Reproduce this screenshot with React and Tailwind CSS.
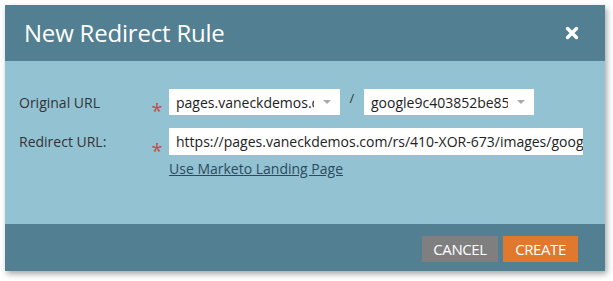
import React from 'react';

const Select = ({ value, width }) => (
  <div className={`flex items-center h-[26px] bg-white pl-[7px] pr-[8px] ${width}`}>
    <span className="flex-1 overflow-hidden whitespace-nowrap text-[14px] text-[#222]">{value}</span>
    <svg width="10" height="6" viewBox="0 0 10 6" className="ml-2 shrink-0">
      <path d="M1 1h8L5 5z" fill="#aaa" />
    </svg>
  </div>
);

const Required = () => (
  <span className="w-[20px] text-[20px] leading-none text-[#c0504d] pt-[12px] h-[26px] flex justify-center">*</span>
);

export default function App() {
  return (
    <div className="w-[613px] h-[281px] bg-white pt-[5px] pl-[5px]" style={{ fontFamily: '"Open Sans", sans-serif' }}>
      <div className="w-[600px] shadow-[2px_3px_6px_rgba(0,0,0,0.35)]">
        {/* Header */}
        <div className="h-[56px] bg-[#527f91] flex items-center justify-between pl-[19px] pr-[26px]">
          <h1 className="text-[24px] text-white font-normal tracking-[-0.2px]">New Redirect Rule</h1>
          <svg width="14" height="14" viewBox="0 0 14 14">
            <path d="M2.5 2.5l9 9M11.5 2.5l-9 9" stroke="white" strokeWidth="3.4" strokeLinecap="round" />
          </svg>
        </div>

        {/* Body */}
        <div className="h-[163px] bg-[#93c2d3] pt-[28px] pl-[14px]">
          <div className="flex items-center">
            <label className="w-[128px] text-[14px] text-[#333]">Original URL</label>
            <Required />
            <div className="flex items-center ml-[2px]">
              <Select value="pages.vaneckdemos.com" width="w-[171px]" />
              <span className="w-[24px] text-center text-[13px] text-[#333] -mt-[6px]">/</span>
              <Select value="google9c403852be85" width="w-[170px]" />
            </div>
          </div>
          <div className="flex items-center mt-[13px]">
            <label className="w-[128px] text-[14px] text-[#333]">Redirect URL:</label>
            <Required />
            <div className="ml-[2px] h-[27px] w-[414px] bg-white pl-[7px] flex items-center overflow-hidden whitespace-nowrap text-[14px] text-[#222]">
              https://pages.vaneckdemos.com/rs/410-XOR-673/images/google9c403852be85.html
            </div>
          </div>
          <div className="pl-[150px] mt-[1px]">
            <a href="#" className="text-[14px] text-[#2c4a5e] underline">Use Marketo Landing Page</a>
          </div>
        </div>

        {/* Footer */}
        <div className="h-[47px] bg-[#527f91] flex items-center justify-end pr-[27px] pt-[3px] gap-[5px]">
          <button className="h-[26px] w-[76px] bg-[#7f7f7f] text-white text-[15px] tracking-[-0.4px]">CANCEL</button>
          <button className="h-[26px] w-[75px] bg-[#e0782d] text-white text-[15px] tracking-[-0.4px]">CREATE</button>
        </div>
      </div>
    </div>
  );
}
